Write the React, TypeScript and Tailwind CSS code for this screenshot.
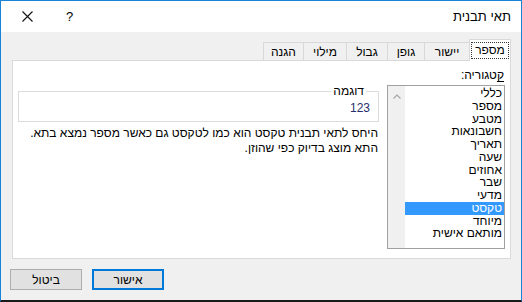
import React from 'react';

const tabs = ['מספר', 'יישור', 'גופן', 'גבול', 'מילוי', 'הגנה'];
const tabWidths = ['w-[42px]', 'w-[46px]', 'w-[38px]', 'w-[42px]', 'w-[44px]', 'w-[41px]'];

const categories = [
  'כללי',
  'מספר',
  'מטבע',
  'חשבונאות',
  'תאריך',
  'שעה',
  'אחוזים',
  'שבר',
  'מדעי',
  'טקסט',
  'מיוחד',
  'מותאם אישית',
];

function CloseIcon() {
  return (
    <svg width="11" height="11" viewBox="0 0 11 11" className="block">
      <path d="M0.5 0.5 L10.5 10.5 M10.5 0.5 L0.5 10.5" stroke="#111" strokeWidth="1.1" fill="none" />
    </svg>
  );
}

function ChevronUp() {
  return (
    <svg width="8" height="5" viewBox="0 0 8 5" className="block">
      <path d="M0.5 4.5 L4 1 L7.5 4.5" stroke="#a6a6a6" strokeWidth="1.2" fill="none" />
    </svg>
  );
}

export default function App() {
  const selected = 'טקסט';

  return (
    <div
      dir="rtl"
      className="w-[522px] h-[302px] flex flex-col border border-[#1883d7] border-b-2 border-b-[#1a1a1a] bg-[#f0f0f0] text-[12px] text-black font-['Liberation_Sans',sans-serif] overflow-hidden"
    >
      {/* title bar */}
      <div className="h-[31px] shrink-0 bg-white flex items-center pr-[10px] pl-[21px]">
        <span className="text-[13px] flex-1">תאי תבנית</span>
        <span className="text-[13px] ml-[33px]">?</span>
        <CloseIcon />
      </div>

      {/* tabs */}
      <div className="mt-[7px] h-[21px] flex items-end pr-[10px] shrink-0">
        {tabs.map((t, i) =>
          i === 0 ? (
            <div
              key={t}
              className={`${tabWidths[i]} h-[22px] -mb-px relative z-10 bg-white border border-[#d9d9d9] border-b-0 flex items-center justify-center`}
            >
              <span className="border border-dotted border-[#333] px-[3px] leading-[13px] py-px">{t}</span>
            </div>
          ) : (
            <div
              key={t}
              className={`${tabWidths[i]} h-[18px] -mr-px bg-[#f0f0f0] border border-[#d9d9d9] border-b-0 flex items-center justify-center`}
            >
              {t}
            </div>
          )
        )}
      </div>

      {/* tab page */}
      <div className="mr-[10px] ml-[11px] h-[199px] shrink-0 bg-white border border-[#d9d9d9] flex pr-[5px] pl-[5px]">
        {/* category column */}
        <div className="w-[118px] shrink-0 pt-[7px]">
          <div className="leading-[14px] pr-[1px]">
            <span className="underline underline-offset-2">ק</span>טגוריה:
          </div>
          <div className="mt-[3px] h-[164px] border border-[#a0a0a0] flex">
            <div className="flex-1 pt-px">
              {categories.map((c) => (
                <div
                  key={c}
                  className={`h-[12.75px] leading-[12.75px] pr-[2px] whitespace-nowrap ${
                    c === selected ? 'bg-[#3399ff] text-white' : ''
                  }`}
                >
                  {c}
                </div>
              ))}
            </div>
            <div className="w-[17px] bg-[#f0f0f0] flex justify-center pt-[8px]">
              <ChevronUp />
            </div>
          </div>
        </div>

        {/* sample and description */}
        <div className="flex-1 ml-0 mr-[8px] pt-[23px]">
          <fieldset className="border border-[#dcdcdc] h-[38px] pr-[8px]">
            <legend className="mr-[4px] px-[2px] leading-[14px]">דוגמה</legend>
            <div className="text-[#26306b] leading-[14px] mt-[3px]">123</div>
          </fieldset>
          <div className="mt-[4px] leading-[15px] pr-[1px]">
            <div>היחס לתאי תבנית טקסט הוא כמו לטקסט גם כאשר מספר נמצא בתא.</div>
            <div>התא מוצג בדיוק כפי שהוזן.</div>
          </div>
        </div>
      </div>

      {/* buttons */}
      <div className="mt-[10px] flex justify-end pl-[9px] gap-[10px]">
        <button className="w-[72px] h-[21px] bg-[#e1e1e1] border-2 border-[#0078d7] flex items-center justify-center">
          אישור
        </button>
        <button className="w-[72px] h-[21px] bg-[#e1e1e1] border border-[#adadad] flex items-center justify-center">
          ביטול
        </button>
      </div>
    </div>
  );
}
